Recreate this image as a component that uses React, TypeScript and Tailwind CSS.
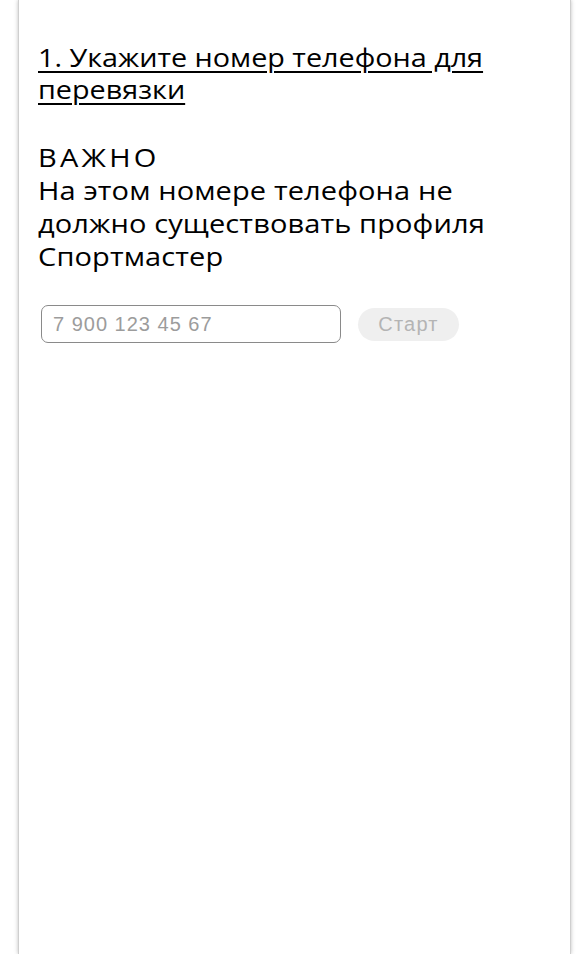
import React from "react";

export default function App() {
  return (
    <div className="w-[587px] h-[954px] bg-white overflow-hidden">
      <div
        className="ml-[18px] w-[553px] h-[954px] bg-white border-x border-[#cfcfcf] shadow-[0_0_4px_rgba(0,0,0,0.25)] pl-[19px] pr-[10px] pt-[41px]"
        style={{ fontFamily: '"Open Sans", "Noto Sans", sans-serif' }}
      >
        <div className="origin-left scale-x-[1.15] text-[25px] leading-[32px] text-black underline underline-offset-[4px] decoration-[1.5px] whitespace-nowrap">
          1. Укажите номер телефона для
          <br />
          перевязки
        </div>
        <div className="mt-[36px] origin-left scale-x-[1.16] text-[25px] leading-[33px] text-black tracking-[2.8px]">
          ВАЖНО
        </div>
        <div className="origin-left scale-x-[1.16] text-[25px] leading-[33px] text-black tracking-[0.1px] whitespace-nowrap">
          На этом номере телефона не
          <br />
          должно существовать профиля
          <br />
          Спортмастер
        </div>
        <div className="mt-[32px] flex items-center gap-[17px] pl-[3px]">
          <div className="w-[300px] h-[38px] border-[1.5px] border-[#8a8a8a] rounded-[7px] flex items-center pl-[11px]">
            <span
              className="text-[20px] tracking-[1px] text-[#9c9c9c]"
              style={{ fontFamily: '"Liberation Sans", Arial, sans-serif' }}
            >
              7 900 123 45 67
            </span>
          </div>
          <div className="w-[101px] h-[33px] rounded-full bg-[#efefef] flex items-center justify-center">
            <span
              className="text-[20px] font-medium tracking-[1.2px] text-[#b4b4b4]"
              style={{ fontFamily: '"Liberation Sans", Arial, sans-serif' }}
            >
              Старт
            </span>
          </div>
        </div>
      </div>
    </div>
  );
}
